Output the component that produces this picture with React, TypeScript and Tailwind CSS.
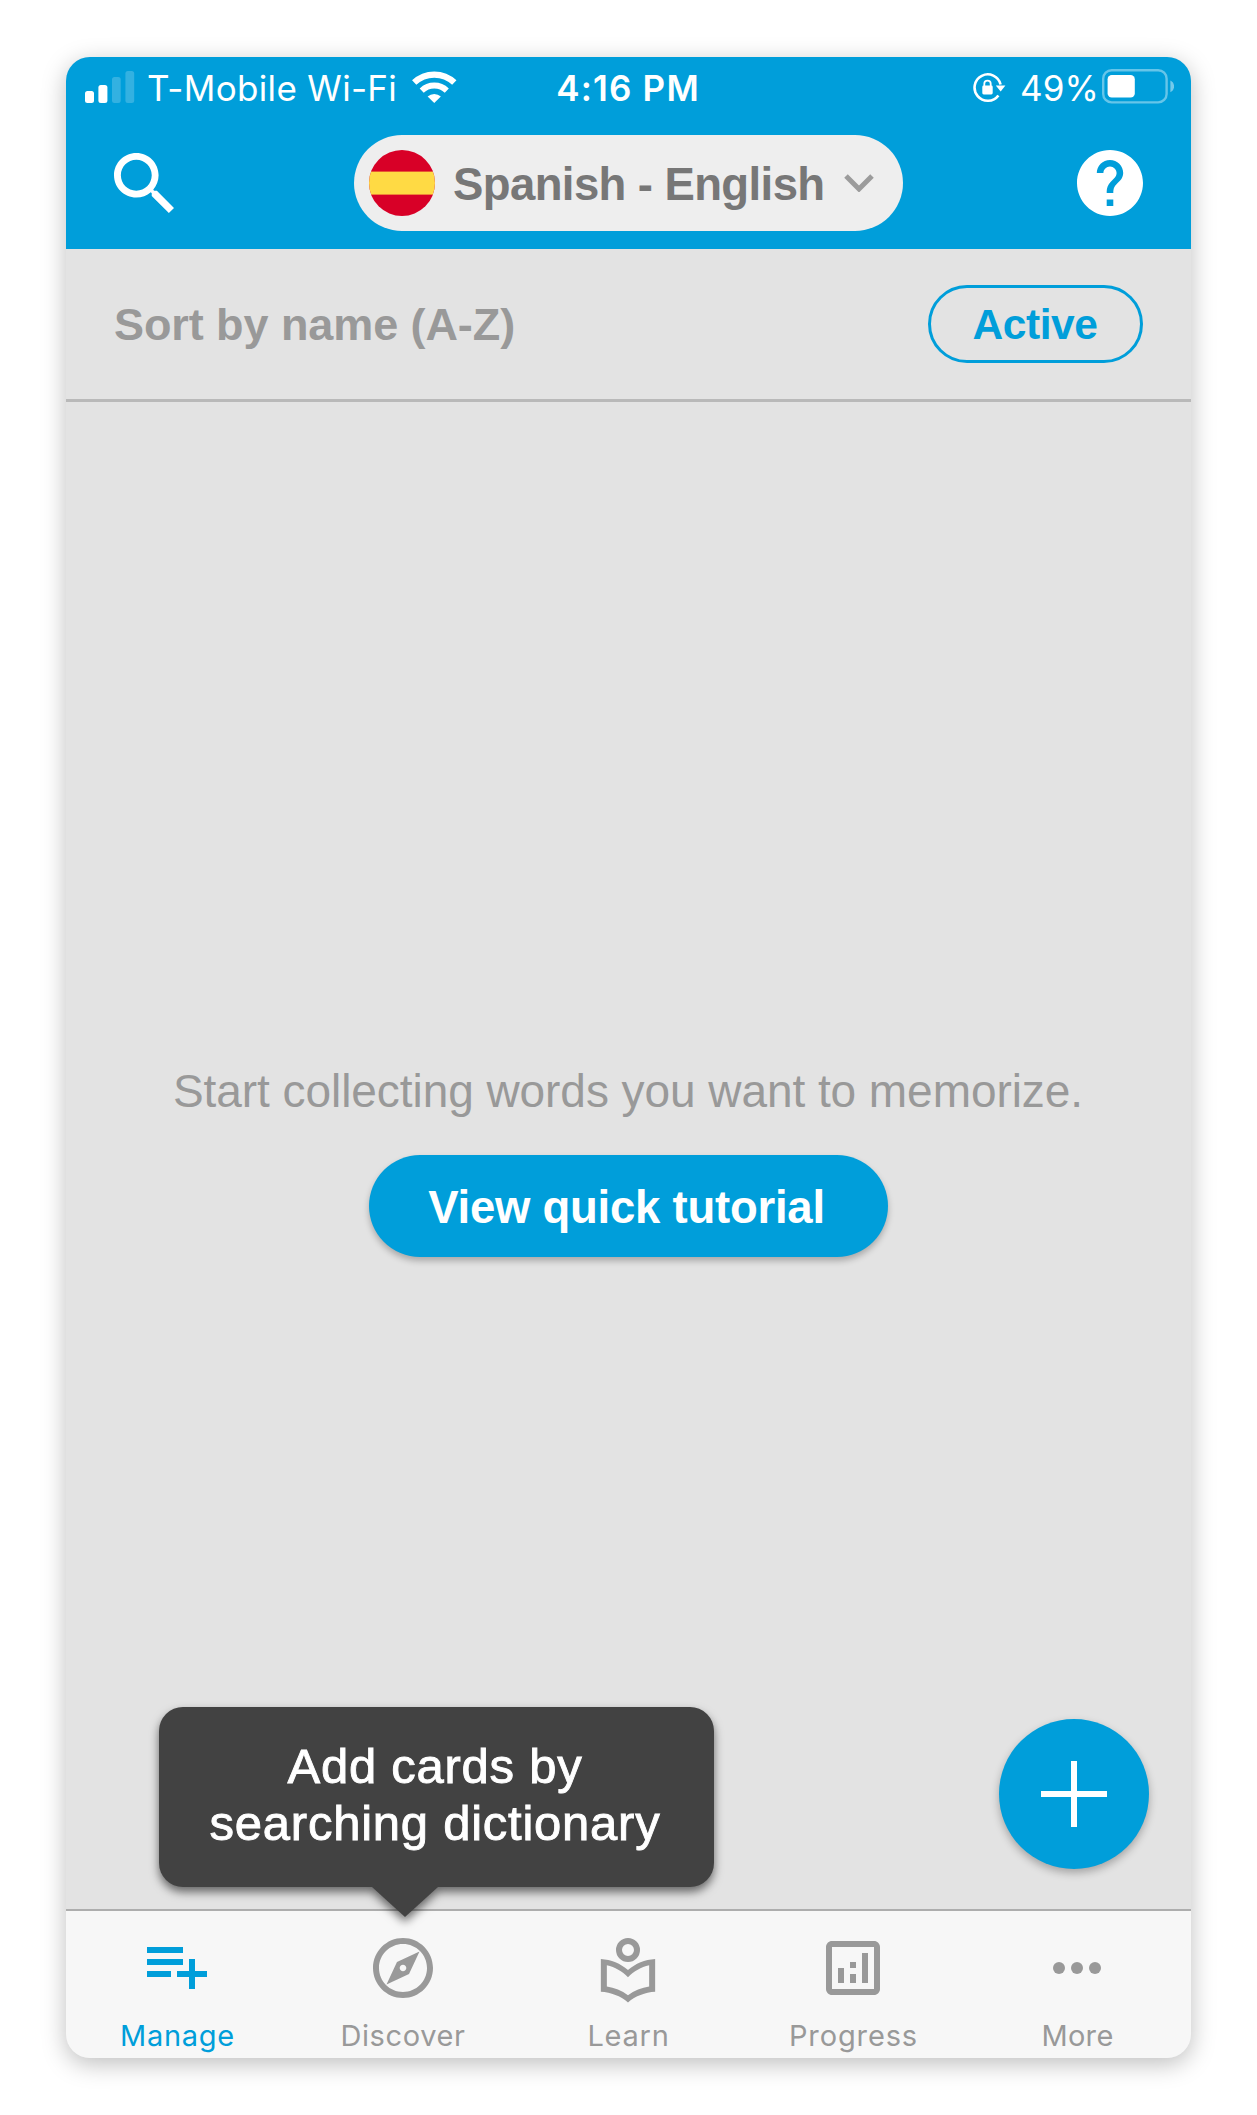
import type { ReactNode } from 'react';

function SignalBars() {
  return (
    <svg width="50" height="32" viewBox="0 0 50 32" fill="#fff" className="mr-[12px] mb-[3px] shrink-0">
      <rect x="0" y="20" width="9" height="12" rx="2.5" />
      <rect x="13.4" y="14" width="9" height="18" rx="2.5" />
      <rect x="27" y="6" width="8.7" height="26" rx="2.5" opacity="0.2" />
      <rect x="40.4" y="0" width="8.8" height="32" rx="2.5" opacity="0.2" />
    </svg>
  );
}

function WifiIcon() {
  return (
    <svg width="45" height="32" viewBox="0 0 45 32" className="mb-[2px] ml-[15px] shrink-0">
      <g fill="none" stroke="#fff">
        <path d="M2.2 11.6a29 29 0 0 1 40.1 0" strokeWidth="6.2" />
        <path d="M9.7 19.6a18 18 0 0 1 25.1 0" strokeWidth="5.8" />
      </g>
      <path d="M22.25 32l-6.6-6.4a9.4 9.4 0 0 1 13.2 0z" fill="#fff" />
    </svg>
  );
}

function RotationLockIcon() {
  return (
    <svg width="33" height="30" viewBox="0 0 33 30" className="mr-[14px] shrink-0">
      <path d="M27.6 11.5A13.2 13.2 0 1 0 25.4 22.4" fill="none" stroke="#fff" strokeWidth="2.6" />
      <path d="M22.8 12.6h9.6l-4.7 6z" fill="#fff" />
      <rect x="9.3" y="12.6" width="10.4" height="8.8" rx="1.4" fill="#fff" />
      <path d="M11.3 13.2v-2.4a3.2 3.2 0 0 1 6.4 0v2.4" fill="none" stroke="#fff" strokeWidth="1.8" />
    </svg>
  );
}

function BatteryIcon() {
  return (
    <svg width="72" height="35" viewBox="0 0 72 35" className="mb-[3px] ml-[3px] shrink-0">
      <rect x="1.2" y="1.2" width="63.4" height="32.2" rx="8.5" fill="none" stroke="#fff" strokeWidth="2.4" opacity="0.4" />
      <rect x="5.6" y="6" width="27.2" height="22.6" rx="4.2" fill="#fff" />
      <path d="M68.4 11.4a6.6 6.6 0 0 1 0 11.8z" fill="#fff" opacity="0.45" />
    </svg>
  );
}

function TabIcon({ children, className = '' }: { children: ReactNode; className?: string }) {
  return (
    <svg width="72" height="72" viewBox="0 0 24 24" fill="currentColor" className={className}>
      {children}
    </svg>
  );
}

const tabs: { label: string; active?: boolean; text: string; icon: ReactNode }[] = [
  {
    label: 'Manage',
    active: true,
    text: 'tracking-[0.72px] mr-[2px]',
    icon: (
      <TabIcon className="-mt-[3px] mb-[3px] mr-[3px]">
        <path d="M14 10H2v2h12v-2zm0-4H2v2h12V6zm4 8v-4h-2v4h-4v2h4v4h2v-4h4v-2h-4zM2 16h8v-2H2v2z" />
      </TabIcon>
    ),
  },
  {
    label: 'Discover',
    text: 'tracking-[0.63px] mr-px',
    icon: (
      <TabIcon className="mr-px">
        <path d="M12 2C6.48 2 2 6.48 2 12s4.48 10 10 10 10-4.48 10-10S17.52 2 12 2zm0 18c-4.41 0-8-3.59-8-8s3.59-8 8-8 8 3.59 8 8-3.59 8-8 8zm-5.5-2.5l7.51-3.49L17.5 6.5 9.99 9.99 6.5 17.5zm5.5-6.6c.61 0 1.1.49 1.1 1.1s-.49 1.1-1.1 1.1-1.1-.49-1.1-1.1.49-1.1 1.1-1.1z" />
      </TabIcon>
    ),
  },
  {
    label: 'Learn',
    text: 'tracking-[0.76px]',
    icon: (
      <TabIcon className="mr-px">
        <circle cx="12" cy="6" r="3" fill="none" stroke="currentColor" strokeWidth="2" />
        <path
          fillRule="evenodd"
          d="M2.95 9C6.4 9.2 9.5 10.5 12 12.7 14.5 10.5 17.6 9.2 21.05 9v10.95c-3.4.2-6.5 1.4-9.05 3.55-2.55-2.15-5.65-3.35-9.05-3.55zM4.95 11.1v7.1c2.5.4 5 1.4 7.05 2.9 2.05-1.5 4.55-2.5 7.05-2.9v-7.1c-2.7.6-5.1 2-7.05 4-1.95-2-4.35-3.4-7.05-4z"
        />
      </TabIcon>
    ),
  },
  {
    label: 'Progress',
    text: 'tracking-[0.88px]',
    icon: (
      <TabIcon className="mr-px">
        <path d="M19 3H5c-1.1 0-2 .9-2 2v14c0 1.1.9 2 2 2h14c1.1 0 2-.9 2-2V5c0-1.1-.9-2-2-2zm0 16H5V5h14v14zM7 12h2v5H7zm8-5h2v10h-2zm-4 7h2v3h-2zm0-4h2v2h-2z" />
      </TabIcon>
    ),
  },
  {
    label: 'More',
    text: 'tracking-[0.33px] mr-[2px]',
    icon: (
      <TabIcon className="mr-[3px]">
        <circle cx="6" cy="12" r="2" />
        <circle cx="12" cy="12" r="2" />
        <circle cx="18" cy="12" r="2" />
      </TabIcon>
    ),
  },
];

function Header() {
  return (
    <header className="h-[192px] shrink-0 bg-[#009eda] text-white">
      <div className="grid h-[62px] grid-cols-[1fr_auto_1fr] items-center pr-[17px] pl-[19px] font-[Inter,sans-serif] text-[35px] leading-[44px] whitespace-nowrap">
        <div className="flex items-center">
          <SignalBars />
          <span className="tracking-[0.33px]">T-Mobile Wi-Fi</span>
          <WifiIcon />
        </div>
        <span className="mr-[3px] font-semibold tracking-[1.2px]">4:16 PM</span>
        <div className="flex items-center justify-end">
          <RotationLockIcon />
          <span className="tracking-[0.1px]">49%</span>
          <BatteryIcon />
        </div>
      </div>
      <div className="mt-4 flex h-24 items-center justify-between px-12">
        <button aria-label="Search" className="flex w-[66px]">
          <svg width="60" height="60" viewBox="3 3 17.49 17.49" fill="#fff">
            <path d="M15.5 14h-.79l-.28-.27C15.41 12.59 16 11.11 16 9.5 16 5.91 13.09 3 9.5 3S3 5.91 3 9.5 5.91 16 9.5 16c1.61 0 3.09-.59 4.23-1.57l.27.28v.79l5 4.99L20.49 19l-4.99-5zm-6 0C7.01 14 5 11.99 5 9.5S7.01 5 9.5 5 14 7.01 14 9.5 11.99 14 9.5 14z" />
          </svg>
        </button>
        <button className="flex h-24 w-[549px] items-center rounded-full bg-[#eeeeee] pl-[15px] text-[#777777]">
          <svg width="66" height="66" viewBox="0 0 66 66" className="shrink-0 rounded-full">
            <rect width="66" height="66" fill="#d80027" />
            <rect y="21.6" width="66" height="23" fill="#ffda44" />
          </svg>
          <span className="ml-[18px] pt-[3px] text-[45.5px] leading-[52px] font-bold tracking-[-0.6px] whitespace-nowrap">
            Spanish - English
          </span>
          <svg width="30" height="18" viewBox="0 0 30 18" className="ml-[19px] shrink-0">
            <path d="M2 2l13 13L28 2" fill="none" stroke="#9b9b9b" strokeWidth="5" />
          </svg>
        </button>
        <button aria-label="Help">
          <svg width="66" height="66" viewBox="2 2 20 20" fill="#fff">
            <path d="M12 2C6.48 2 2 6.48 2 12s4.48 10 10 10 10-4.48 10-10S17.52 2 12 2zm1 17h-2v-2h2v2zm2.07-7.75l-.9.92C13.45 12.9 13 13.5 13 15h-2v-.5c0-1.1.45-2.1 1.17-2.83l1.24-1.26c.37-.36.59-.86.59-1.41 0-1.1-.9-2-2-2s-2 .9-2 2H8c0-2.21 1.79-4 4-4s4 1.79 4 4c0 .88-.36 1.68-.93 2.25z" />
          </svg>
        </button>
      </div>
    </header>
  );
}

export default function App() {
  return (
    <div className="h-[2115px] w-[1257px] bg-white pt-[57px] pl-[66px] font-['Liberation_Sans',Arial,sans-serif]">
      <div className="flex h-[2001px] w-[1125px] flex-col overflow-hidden rounded-[24px] bg-[#e3e3e3] shadow-[0_6px_24px_rgba(0,0,0,0.26)]">
        <Header />

        <div className="flex h-[153px] shrink-0 items-center justify-between border-b-[3px] border-[#b9b9b9] px-12">
          <span className="pt-[2px] text-[45px] leading-[52px] font-bold tracking-[-0.08px] whitespace-nowrap text-[#999999]">
            Sort by name (A-Z)
          </span>
          <button className="flex h-[78px] w-[215px] items-center justify-center rounded-full border-[3px] border-[#009eda] pt-[2px] pr-px text-[42.5px] leading-[50px] font-bold tracking-[-0.45px] text-[#009eda]">
            Active
          </button>
        </div>

        <main className="relative flex flex-1 flex-col items-center pt-[663px]">
          <p className="pr-px text-[46px] leading-[52px] tracking-[-0.06px] whitespace-nowrap text-[#999999]">
            Start collecting words you want to memorize.
          </p>
          <button className="mt-[38px] flex h-[102px] w-[519px] items-center justify-center rounded-full bg-[#009eda] pt-[3px] pr-[4px] text-[45.5px] leading-[52px] font-bold tracking-[-0.24px] whitespace-nowrap text-white shadow-[0_4px_6px_rgba(0,0,0,0.25)]">
            View quick tutorial
          </button>

          <button
            aria-label="Add"
            className="absolute right-[42px] bottom-[40px] flex size-[150px] items-center justify-center rounded-full bg-[#009eda] shadow-[0_4px_8px_rgba(0,0,0,0.28)]"
          >
            <svg width="66" height="66" viewBox="0 0 66 66">
              <path d="M33 0v66M0 33h66" stroke="#fff" strokeWidth="6" />
            </svg>
          </button>

          <div className="absolute bottom-[22px] left-[93px] z-10 h-[180px] w-[555px] rounded-[24px] bg-[#424242] pt-[31px] pr-[3px] text-center text-[49px] leading-[57px] tracking-[0.75px] whitespace-nowrap text-white drop-shadow-[0_5px_5px_rgba(0,0,0,0.55)] [-webkit-text-stroke:0.9px_white]">
            Add cards by
            <br />
            searching dictionary
            <svg width="66" height="31" viewBox="0 0 66 31" className="absolute top-[179px] left-[213px]">
              <path d="M0 0h66v1L33 31 0 1z" fill="#424242" />
            </svg>
          </div>
        </main>

        <nav className="grid h-[149px] shrink-0 grid-cols-5 border-t-2 border-[#adadad] bg-[#f7f7f7] font-[Inter,sans-serif]">
          {tabs.map((tab) => (
            <button
              key={tab.label}
              className={`flex flex-col items-center pt-[21px] ${tab.active ? 'text-[#009eda]' : 'text-[#999999]'}`}
            >
              {tab.icon}
              <span className={`mt-[14px] text-[29px] leading-[36px] ${tab.text}`}>{tab.label}</span>
            </button>
          ))}
        </nav>
      </div>
    </div>
  );
}
